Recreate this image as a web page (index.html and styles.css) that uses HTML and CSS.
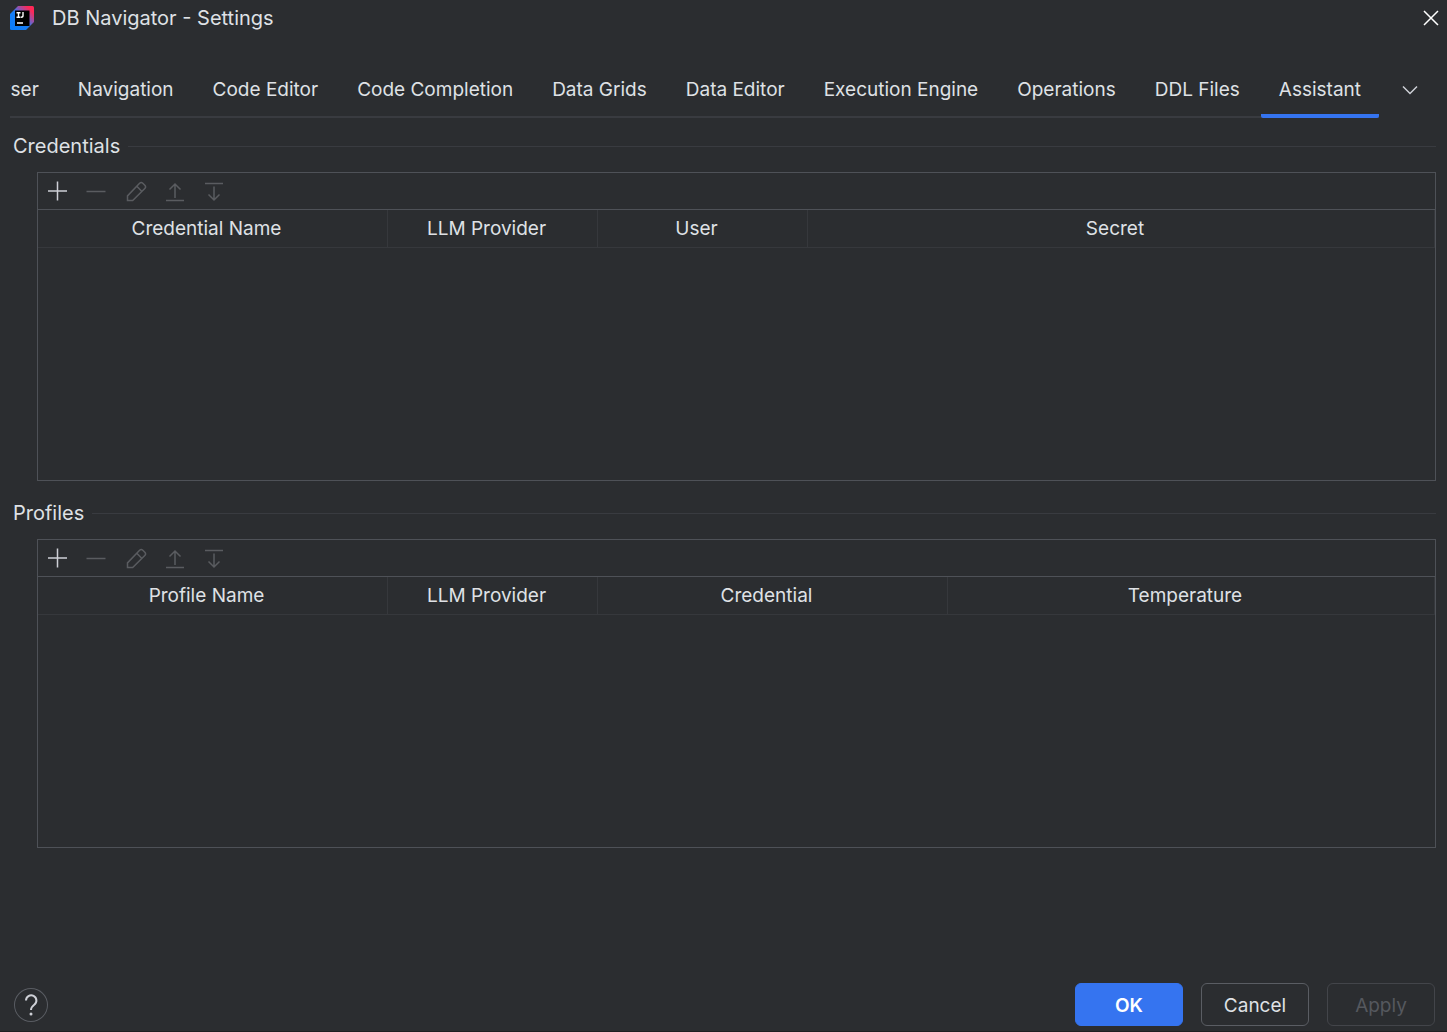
FILE: index.html
```html
<!DOCTYPE html>
<html lang="en">
<head>
<meta charset="utf-8">
<title>DB Navigator - Settings</title>
<link rel="stylesheet" href="styles.css">
</head>
<body>
<svg class="sprite" aria-hidden="true">
  <symbol id="add" viewBox="0 0 24 24"><path d="M12.500 2.500v19M3 12h19"/></symbol>
  <symbol id="remove" viewBox="0 0 24 24"><path d="M2.500 12.500h19"/></symbol>
  <symbol id="edit" viewBox="0 0 24 24"><path d="M4.500 21.500v-4.600L16.600 4.300a2.300 2.300 0 0 1 3.200 0l2 2a2.300 2.300 0 0 1 0 3.200L9.700 21.500zM13.800 7.300l4.900 4.900"/></symbol>
  <symbol id="up" viewBox="0 0 24 24"><path d="M4 21.500h18M13 19V5.500M7.500 10.500L13 5l5.500 5.500"/></symbol>
  <symbol id="down" viewBox="0 0 24 24"><path d="M4 4.500h18M13 7.500V20.500M7.500 15.500L13 21l5.500-5.500"/></symbol>
</svg>
<div class="dialog">
  <header class="titlebar">
    <svg class="logo" viewBox="0 0 24 24" aria-hidden="true">
      <defs>
        <linearGradient id="logo-fill" x1="0" y1="1" x2="1" y2="0"><stop offset="0" stop-color="#087cfa"/><stop offset=".45" stop-color="#187df5"/><stop offset=".6" stop-color="#7a5cc0"/><stop offset=".85" stop-color="#fe2857"/><stop offset="1" stop-color="#fe2857"/></linearGradient>
      </defs>
      <path d="M8 0H22.500Q24 0 24 1.500V16L16 24H1.500Q0 24 0 22.500V8z" fill="url(#logo-fill)"/>
      <path d="M5 4.500h14.500V20H5z" fill="#000"/>
      <path d="M6.500 6.700h4M8.500 6.700v4.600M6.500 11.300h4M13 6v3.800q0 1.500-2 1.500M7 17h6" fill="none" stroke="#fff" stroke-width="1.400"/>
    </svg>
    <h1 class="title">DB Navigator - Settings</h1>
    <button class="icon-button close" type="button" aria-label="Close"><svg viewBox="0 0 16 16"><path d="M1 1l14 14M15 1L1 15"/></svg></button>
  </header>

  <nav class="tabbar">
    <div class="tabs" role="tablist">
      <button class="tab" type="button" role="tab">Browser</button>
      <button class="tab" type="button" role="tab">Navigation</button>
      <button class="tab" type="button" role="tab">Code Editor</button>
      <button class="tab" type="button" role="tab">Code Completion</button>
      <button class="tab" type="button" role="tab">Data Grids</button>
      <button class="tab" type="button" role="tab">Data Editor</button>
      <button class="tab" type="button" role="tab">Execution Engine</button>
      <button class="tab" type="button" role="tab">Operations</button>
      <button class="tab" type="button" role="tab">DDL Files</button>
      <button class="tab selected" type="button" role="tab" aria-selected="true">Assistant</button>
    </div>
    <button class="icon-button more" type="button" aria-label="More tabs"><svg viewBox="0 0 16 16"><path d="M1 4.500l7 7 7-7"/></svg></button>
  </nav>

  <main class="content">
    <section class="group">
      <h2 class="group-title">Credentials</h2>
      <div class="panel">
        <div class="toolbar">
          <button class="tool" type="button" aria-label="Add"><svg><use href="#add"/></svg></button>
          <button class="tool" type="button" aria-label="Remove" disabled><svg><use href="#remove"/></svg></button>
          <button class="tool" type="button" aria-label="Edit" disabled><svg><use href="#edit"/></svg></button>
          <button class="tool" type="button" aria-label="Move up" disabled><svg><use href="#up"/></svg></button>
          <button class="tool" type="button" aria-label="Move down" disabled><svg><use href="#down"/></svg></button>
        </div>
        <table class="grid">
          <colgroup><col class="wide"><col class="narrow"><col class="narrow"><col></colgroup>
          <thead><tr><th>Credential Name</th><th>LLM Provider</th><th>User</th><th>Secret</th></tr></thead>
          <tbody></tbody>
        </table>
      </div>
    </section>

    <section class="group">
      <h2 class="group-title">Profiles</h2>
      <div class="panel">
        <div class="toolbar">
          <button class="tool" type="button" aria-label="Add"><svg><use href="#add"/></svg></button>
          <button class="tool" type="button" aria-label="Remove" disabled><svg><use href="#remove"/></svg></button>
          <button class="tool" type="button" aria-label="Edit" disabled><svg><use href="#edit"/></svg></button>
          <button class="tool" type="button" aria-label="Move up" disabled><svg><use href="#up"/></svg></button>
          <button class="tool" type="button" aria-label="Move down" disabled><svg><use href="#down"/></svg></button>
        </div>
        <table class="grid">
          <colgroup><col class="wide"><col class="narrow"><col class="wide"><col></colgroup>
          <thead><tr><th>Profile Name</th><th>LLM Provider</th><th>Credential</th><th>Temperature</th></tr></thead>
          <tbody></tbody>
        </table>
      </div>
    </section>
  </main>

  <footer class="footer">
    <button class="help" type="button" aria-label="Help"><svg viewBox="0 0 34 34"><path d="M12 12.500a5.200 5.200 0 1 1 8.200 4.200c-2 1.500-3.200 2.400-3.200 5.300"/><circle cx="17" cy="26" r="1.500"/></svg></button>
    <button class="button primary" type="button">OK</button>
    <button class="button" type="button">Cancel</button>
    <button class="button" type="button" disabled>Apply</button>
  </footer>
</div>
</body>
</html>
```
FILE: styles.css
```css
* {
  box-sizing: border-box;
}

body {
  margin: 0;
  background: #2b2d30;
  color: #dfe1e5;
  font: 19px/24px Inter, "Liberation Sans", sans-serif;
}

button {
  margin: 0;
  padding: 0;
  border: 0;
  background: none;
  color: inherit;
  font: inherit;
}

svg {
  display: block;
}

.sprite {
  display: none;
}

.dialog {
  display: flex;
  flex-direction: column;
  min-height: 100vh;
  border-bottom: 1px solid #1e1f22;
}

.titlebar {
  display: flex;
  align-items: center;
  height: 36px;
  padding: 0 8px 0 10px;
}

.logo {
  width: 24px;
  height: 24px;
}

.title {
  flex: 1;
  margin: 0 0 0 18px;
  font-size: 20px;
  font-weight: 400;
}

.icon-button svg {
  width: 16px;
  height: 16px;
  fill: none;
  stroke: #ced0d6;
  stroke-width: 1.5;
}

.close svg {
  stroke: #fff;
}

.tabbar {
  display: flex;
  align-items: center;
  margin: 26px 29px 0 10px;
}

.tabs {
  display: flex;
  flex: 1;
  gap: 3px;
  justify-content: flex-end;
  min-width: 0;
  overflow: hidden;
  box-shadow: inset 0 -2px #393b40;
}

.tab {
  flex: none;
  height: 56px;
  padding: 4px 18px;
  white-space: nowrap;
}

.selected {
  background: linear-gradient(#3574f0, #3574f0) bottom / 100% 4px no-repeat;
  border-radius: 2px;
}

.more {
  margin-left: 23px;
}

.content {
  flex: 1;
  padding: 16px 11px 0 13px;
}

.group {
  margin-bottom: 20px;
}

.group-title {
  display: flex;
  align-items: center;
  gap: 8px;
  margin: 0 0 14px;
  font-size: 20px;
  font-weight: 400;
}

.group-title::after {
  content: "";
  flex: 1;
  height: 1px;
  background: #393b40;
}

.panel {
  height: 309px;
  margin-left: 24px;
  border: 1px solid #4e5157;
}

.toolbar {
  display: flex;
  align-items: center;
  gap: 15px;
  height: 37px;
  padding-left: 7px;
  border-bottom: 1px solid #4e5157;
}

.tool svg {
  width: 24px;
  height: 24px;
  fill: none;
  stroke: #ced0d6;
  stroke-width: 1.5;
}

.tool:disabled svg {
  stroke: #5a5c60;
}

.grid {
  width: 100%;
  table-layout: fixed;
  border-collapse: separate;
  border-spacing: 0;
}

.wide {
  width: 350px;
}

.narrow {
  width: 210px;
}

.grid th {
  height: 38px;
  padding: 0 12px 0 0;
  border-right: 1px solid #36383c;
  border-bottom: 1px solid #36383c;
  font-weight: 400;
}

.footer {
  display: flex;
  align-items: center;
  gap: 18px;
  padding: 0 12px 5px 14px;
}

.help {
  width: 34px;
  height: 34px;
  margin-right: auto;
  border-radius: 50%;
  box-shadow: inset 0 0 0 1px #5a5d63;
}

.help svg {
  width: 34px;
  height: 34px;
  fill: none;
  stroke: #ced0d6;
  stroke-width: 2;
}

.help circle {
  fill: #ced0d6;
  stroke: none;
}

.button {
  width: 108px;
  height: 43px;
  padding-top: 2px;
  border: 1px solid #5a5d63;
  border-radius: 6px;
}

.primary {
  border-color: #3574f0;
  background: #3574f0;
  color: #fff;
  font-weight: 600;
}

.button:disabled {
  border-color: #43454a;
  color: #55585e;
}
```
